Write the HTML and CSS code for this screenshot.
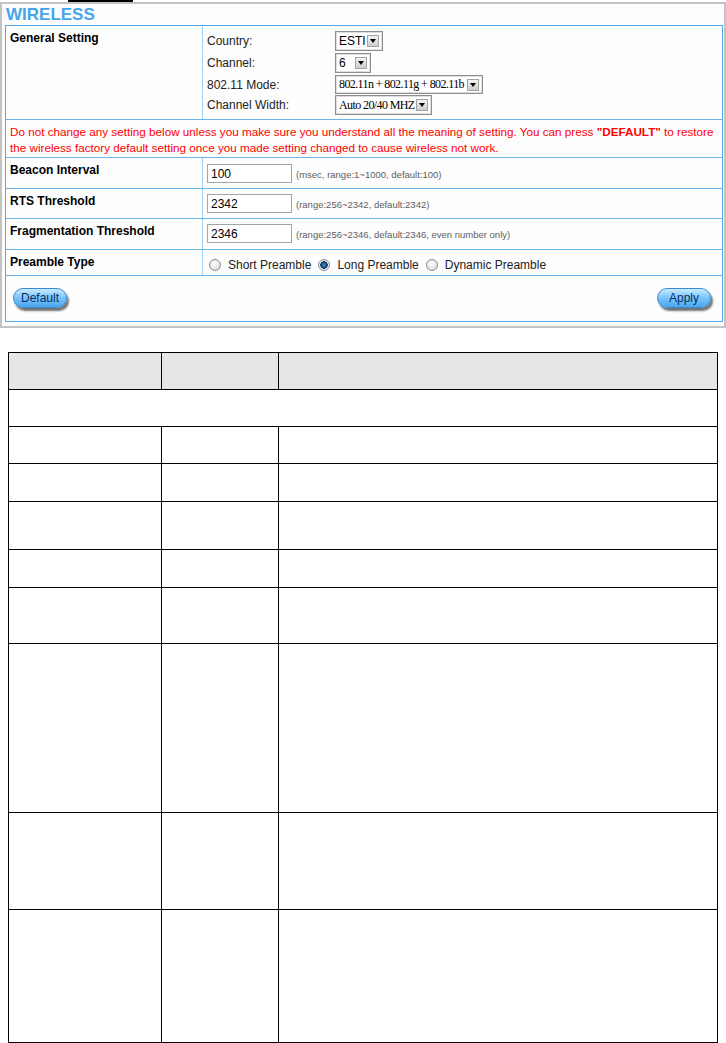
FILE: index.html
```html
<!DOCTYPE html>
<html lang="en">

<head>
    <meta charset="UTF-8">
    <meta name="viewport" content="width=device-width, initial-scale=1.0">
    <link rel="stylesheet" href="styles.css">
    <title>Wireless</title>
</head>

<body>

    <div class="topBar"></div>

    <div class="panel">
        <h1 class="panelTitle">WIRELESS</h1>
        <div class="setTable">
            <div class="row rowGeneral">
                <div class="cellName">General Setting</div>
                <div class="cellValue">
                    <div class="opt">
                        <span class="optLabel">Country:</span>
                        <div class="sel selCountry"><span class="selText">ESTI</span><span class="selArrow"></span></div>
                    </div>
                    <div class="opt">
                        <span class="optLabel">Channel:</span>
                        <div class="sel selChannel"><span class="selText">6</span><span class="selArrow"></span></div>
                    </div>
                    <div class="opt optMode">
                        <span class="optLabel">802.11 Mode:</span>
                        <div class="sel selMode"><span class="selText serif">802.11n + 802.11g + 802.11b</span><span class="selArrow"></span></div>
                    </div>
                    <div class="opt">
                        <span class="optLabel">Channel Width:</span>
                        <div class="sel selWidth"><span class="selText serif">Auto 20/40 MHZ</span><span class="selArrow"></span></div>
                    </div>
                </div>
            </div>
            <div class="row rowWarn">
                <p class="warn">Do not change any setting below unless you make sure you understand all the meaning of setting. You can press <b>"DEFAULT"</b> to restore<br>the wireless factory default setting once you made setting changed to cause wireless not work.</p>
            </div>
            <div class="row rowBeacon">
                <div class="cellName">Beacon Interval</div>
                <div class="cellValue fieldLine">
                    <input class="field" type="text" value="100">
                    <span class="hint">(msec, range:1~1000, default:100)</span>
                </div>
            </div>
            <div class="row rowRts">
                <div class="cellName">RTS Threshold</div>
                <div class="cellValue fieldLine">
                    <input class="field" type="text" value="2342">
                    <span class="hint">(range:256~2342, default:2342)</span>
                </div>
            </div>
            <div class="row rowFrag">
                <div class="cellName">Fragmentation Threshold</div>
                <div class="cellValue fieldLine">
                    <input class="field" type="text" value="2346">
                    <span class="hint">(range:256~2346, default:2346, even number only)</span>
                </div>
            </div>
            <div class="row rowPreamble">
                <div class="cellName">Preamble Type</div>
                <div class="cellValue radios">
                    <span class="radio"></span><span class="radioText">Short Preamble</span>
                    <span class="radio on"></span><span class="radioText">Long Preamble</span>
                    <span class="radio"></span><span class="radioText">Dynamic Preamble</span>
                </div>
            </div>
            <div class="row rowButtons">
                <span class="pill">Default</span>
                <span class="pill">Apply</span>
            </div>
        </div>
    </div>

    <div class="docTable">
        <div class="head"></div>
        <div class="head"></div>
        <div class="head"></div>
        <div class="section"></div>
        <div></div><div></div><div></div>
        <div></div><div></div><div></div>
        <div></div><div></div><div></div>
        <div></div><div></div><div></div>
        <div></div><div></div><div></div>
        <div></div><div></div><div></div>
        <div></div><div></div><div></div>
        <div></div><div></div><div></div>
    </div>

</body>

</html>
```

FILE: styles.css
```css
* {
    margin: 0;
    padding: 0;
    box-sizing: border-box;
}

body {
    background-color: #fff;
    font-family: "Liberation Sans", Arial, sans-serif;
    font-size: 12px;
    color: #000;
}

.topBar {
    width: 65px;
    height: 2px;
    margin-left: 68px;
    background-color: #000;
}

.panel {
    width: 726px;
    height: 326px;
    border: 2px solid #c3c3c3;
    background-color: #fdfdfd;
    padding: 0 1px 0 3px;
}

.panelTitle {
    height: 21px;
    line-height: 21px;
    padding-left: 1px;
    font-size: 17px;
    font-weight: bold;
    color: #46a4ea;
}

.setTable {
    border: 1px solid #55a7e8;
}

.setTable .row {
    display: grid;
    grid-template-columns: 197px 1fr;
    border-bottom: 1px solid #6cb5ec;
}

.setTable .row:last-child {
    border-bottom: none;
}

.rowGeneral {
    height: 94px;
}

.rowWarn {
    height: 38px;
}

.rowBeacon,
.rowFrag {
    height: 31px;
}

.rowRts {
    height: 30px;
}

.rowPreamble {
    height: 26px;
}

.rowButtons {
    height: 45px;
}

.setTable .cellName {
    border-right: 1px solid #a6d2f3;
    padding: 5px 4px 0;
    line-height: 14px;
    font-weight: bold;
}

.setTable .cellValue {
    padding: 5px 4px 0;
}

/* general setting options */
.opt {
    display: flex;
    align-items: center;
    margin-bottom: 2px;
}

.optMode {
    margin-top: 2px;
    margin-bottom: 1px;
}

.optLabel {
    width: 128px;
    color: #222;
}

.sel {
    display: flex;
    align-items: center;
    height: 20px;
    padding: 0 3px 0 3px;
    border: 1px solid #8f8f8f;
    box-shadow: inset 0 0 0 1px #dedede;
    background-color: #fff;
}

.selCountry {
    width: 48px;
}

.selChannel {
    width: 36px;
}

.selMode {
    width: 148px;
    height: 19px;
}

.selWidth {
    width: 97px;
}

.selText {
    flex: 1;
    white-space: nowrap;
    overflow: hidden;
}

.serif {
    font-family: "Liberation Serif", "Times New Roman", serif;
    letter-spacing: -0.6px;
}

.selArrow {
    display: flex;
    align-items: center;
    justify-content: center;
    width: 12px;
    height: 12px;
    border: 1px solid #a3a3a3;
    background: linear-gradient(#f4f4f4, #cdcdcd);
}

.selArrow::before {
    content: "";
    border-left: 3px solid transparent;
    border-right: 3px solid transparent;
    border-top: 4px solid #000;
}

/* warning */
.rowWarn {
    display: block;
}

.warn {
    padding: 4px 4px 0;
    line-height: 16px;
    font-size: 11.7px;
    color: #f00;
    white-space: nowrap;
}

/* text fields */
.fieldLine {
    display: flex;
    align-items: baseline;
}

.rowBeacon .fieldLine {
    padding-top: 6px;
}

.field {
    width: 85px;
    height: 19px;
    padding-left: 3px;
    border: 1px solid #a4a4a4;
    background-color: #fff;
    font-family: "Liberation Sans", Arial, sans-serif;
    font-size: 12px;
    color: #000;
}

.hint {
    margin-left: 4px;
    font-size: 9.5px;
    color: #606060;
}

/* preamble radios */
.radios {
    display: flex;
    align-items: center;
    line-height: 14px;
}

.setTable .radios {
    padding: 5px 6px 0;
}

.radio {
    width: 12px;
    height: 12px;
    margin-right: 7px;
    border: 1px solid #8d8d8d;
    border-radius: 50%;
    background: radial-gradient(circle at 40% 35%, #fff, #d2d2d2);
}

.radio.on {
    background: radial-gradient(circle, #4a9be0 0, #1b5b98 2px, #0d3562 3.5px, #f2f2f2 4px, #cfcfcf 100%);
}

.radioText {
    margin-right: 7px;
    color: #222;
}

/* buttons */
.setTable .rowButtons {
    display: flex;
    justify-content: space-between;
    align-items: flex-start;
    padding: 12px 11px 0 7px;
}

.pill {
    width: 54px;
    height: 20px;
    line-height: 18px;
    border: 1px solid #3a8bd2;
    border-radius: 10px;
    background: linear-gradient(#c8eaff 0%, #80c8fb 45%, #4aa5ee 100%);
    box-shadow: 2px 3px 2px rgba(0, 0, 0, 0.55);
    text-align: center;
    font-family: "Liberation Sans Narrow", "Liberation Sans", Arial, sans-serif;
    font-size: 12px;
    color: #0a2c66;
}

/* blank document table below */
.docTable {
    display: grid;
    grid-template-columns: 153px 117px 439px;
    grid-template-rows: 37px 37px 37px 38px 48px 38px 56px 169px 97px 133px;
    width: 710px;
    margin: 24px 0 0 8px;
    border-top: 1px solid #000;
    border-left: 1px solid #000;
}

.docTable div {
    border-right: 1px solid #000;
    border-bottom: 1px solid #000;
}

.docTable .head {
    background-color: #e6e6e6;
}

.docTable .section {
    grid-column: 1 / -1;
}
```
